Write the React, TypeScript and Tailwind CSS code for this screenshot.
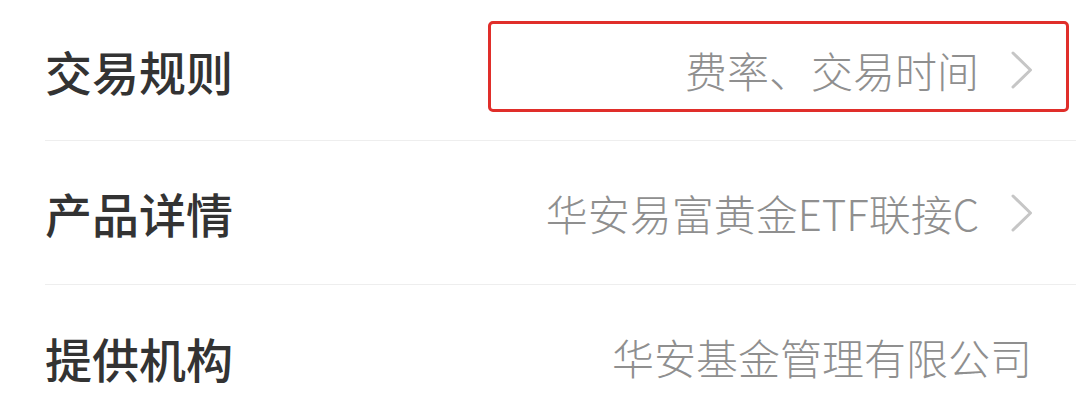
import React from "react";

function Chevron() {
  return (
    <svg width="22" height="38" viewBox="0 0 22 38" className="shrink-0">
      <polyline points="2,2 19.5,19 2,36" fill="none" stroke="#c6c6c6" strokeWidth="3" strokeLinecap="round" strokeLinejoin="round" />
    </svg>
  );
}

const font = { fontFamily: '"Noto Sans CJK SC", "Noto Sans", sans-serif' };

export default function App() {
  return (
    <div className="w-[1076px] h-[412px] bg-white overflow-hidden" style={font}>
      <div className="pl-[45px]">
        <div className="relative flex items-center justify-between h-[141px] border-b border-[#eeeeee] pr-[43px]">
          <span className="text-[47px] leading-none font-medium text-[#333333]">交易规则</span>
          <div className="flex items-center gap-[32px]">
            <span className="text-[42px] leading-none font-light text-[#8f8f8f]">费率、交易时间</span>
            <Chevron />
          </div>
          <div className="absolute left-[443px] top-[21px] w-[581px] h-[91px] border-[3px] border-[#e02e2a] rounded-[5px]" />
        </div>
        <div className="flex items-center justify-between h-[144px] border-b border-[#eeeeee] pr-[43px]">
          <span className="text-[47px] leading-none font-medium text-[#333333]">产品详情</span>
          <div className="flex items-center gap-[32px]">
            <span className="text-[42px] leading-none font-light text-[#8f8f8f]">华安易富黄金ETF联接C</span>
            <Chevron />
          </div>
        </div>
        <div className="flex items-center justify-between h-[144px] pr-[44px]">
          <span className="text-[47px] leading-none font-medium text-[#333333]">提供机构</span>
          <span className="text-[42px] leading-none font-light text-[#8f8f8f]">华安基金管理有限公司</span>
        </div>
      </div>
    </div>
  );
}
